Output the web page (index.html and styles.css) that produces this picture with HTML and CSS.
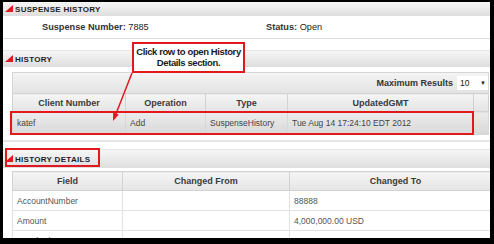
FILE: index.html
```html
<!DOCTYPE html>
<html lang="en">
<head>
    <meta charset="UTF-8">
    <title>Suspense History</title>
    <link rel="stylesheet" href="styles.css">
</head>
<body>
    <div class="page">
        <section class="panel">
            <div class="panel-head head-top">
                <svg class="tri" width="8" height="7" viewBox="0 0 8 7"><polygon points="0,7 8,0 8,7" fill="#e3171e"/></svg>
                <span>SUSPENSE HISTORY</span>
            </div>
            <div class="summary">
                <div class="summary-item"><b>Suspense Number:</b> 7885</div>
                <div class="summary-item"><b>Status:</b> Open</div>
            </div>
        </section>

        <section class="panel history">
            <div class="panel-head head-mid">
                <svg class="tri" width="8" height="7" viewBox="0 0 8 7"><polygon points="0,7 8,0 8,7" fill="#e3171e"/></svg>
                <span>HISTORY</span>
            </div>
            <div class="history-body">
                <div class="toolbar">
                    <span class="toolbar-label">Maximum Results</span>
                    <div class="select">
                        <span>10</span>
                        <span class="caret">&#9660;</span>
                    </div>
                </div>
                <table class="grid">
                    <colgroup>
                        <col style="width: 113px">
                        <col style="width: 80px">
                        <col style="width: 82px">
                        <col style="width: 186px">
                        <col>
                    </colgroup>
                    <thead>
                        <tr>
                            <th>Client Number</th>
                            <th>Operation</th>
                            <th>Type</th>
                            <th>UpdatedGMT</th>
                            <th></th>
                        </tr>
                    </thead>
                    <tbody>
                        <tr class="row-selected">
                            <td>katef</td>
                            <td>Add</td>
                            <td>SuspenseHistory</td>
                            <td>Tue Aug 14 17:24:10 EDT 2012</td>
                            <td></td>
                        </tr>
                    </tbody>
                </table>
            </div>
        </section>

        <section class="panel details">
            <div class="panel-head head-low">
                <svg class="tri" width="8" height="7" viewBox="0 0 8 7"><polygon points="0,7 8,0 8,7" fill="#e3171e"/></svg>
                <span>HISTORY DETAILS</span>
            </div>
            <table class="grid detail-grid">
                <colgroup>
                    <col style="width: 110px">
                    <col style="width: 167px">
                    <col>
                </colgroup>
                <thead>
                    <tr>
                        <th>Field</th>
                        <th>Changed From</th>
                        <th>Changed To</th>
                    </tr>
                </thead>
                <tbody>
                    <tr>
                        <td>AccountNumber</td>
                        <td></td>
                        <td>88888</td>
                    </tr>
                    <tr>
                        <td>Amount</td>
                        <td></td>
                        <td>4,000,000.00 USD</td>
                    </tr>
                    <tr>
                        <td>AttachedAmount</td>
                        <td></td>
                        <td>0.00 USD</td>
                    </tr>
                </tbody>
            </table>
        </section>

        <!-- annotations drawn over the screenshot -->
        <div class="callout">Click row to open History<br>Details section.</div>
        <svg class="arrow" width="487" height="236" viewBox="0 0 487 236">
            <line x1="129" y1="71" x2="112.5" y2="113" stroke="#e3171e" stroke-width="1.5"/>
            <polygon points="110,119 115.8,112.6 110.2,110.4" fill="#e3171e"/>
        </svg>
        <div class="mark mark-row"></div>
        <div class="mark mark-head"></div>
    </div>
</body>
</html>
```

FILE: styles.css
```css
* {
    margin: 0;
    padding: 0;
    box-sizing: border-box;
}

html, body {
    background-color: #000;
}

body {
    font-family: "Liberation Sans", Arial, sans-serif;
    color: #333;
}

.page {
    position: relative;
    margin: 2px 4px 0 3px;
    height: 236px;
    background-color: #fff;
    overflow: hidden;
}

.panel-head {
    display: flex;
    align-items: center;
    gap: 2px;
    padding-left: 2px;
    background: linear-gradient(#f6f6f6, #dedede);
    border-top: 1px solid #e6e6e6;
    font-size: 8px;
    font-weight: bold;
    letter-spacing: 0.3px;
    color: #1e1e1e;
}

.panel-head .tri {
    margin-top: -1px;
}

.head-top {
    height: 14px;
    border-top: none;
}

.head-mid {
    height: 17px;
}

.head-low {
    height: 19px;
}

.summary {
    display: flex;
    height: 23px;
    align-items: center;
    padding-left: 39px;
    border-bottom: 1px solid #dcdcdc;
    font-size: 9.2px;
    color: #222;
}

.summary-item {
    width: 275px;
}

.summary-item b {
    color: #333;
}

.history {
    margin-top: 11px;
}

.history-body {
    padding: 5px 1px 5px 9px;
    border-bottom: 2px solid #e6e6e6;
}

.toolbar {
    display: flex;
    align-items: center;
    justify-content: flex-end;
    gap: 4px;
    height: 21px;
    padding-right: 0;
    background: linear-gradient(#f4f4f4, #e3e3e3);
    border: 1px solid #d6d6d6;
    border-bottom: none;
}

.toolbar-label {
    font-size: 9px;
    font-weight: bold;
    color: #333;
}

.select {
    display: flex;
    align-items: center;
    justify-content: space-between;
    width: 31px;
    height: 14px;
    padding: 0 2px 0 3px;
    background-color: #fff;
    font-size: 8.5px;
    color: #222;
}

.caret {
    font-size: 6px;
}

.grid {
    width: 100%;
    border-collapse: collapse;
    table-layout: fixed;
}

.grid th {
    height: 18px;
    font-size: 9px;
    font-weight: bold;
    color: #3a3a3a;
    text-align: center;
    background: linear-gradient(#f5f5f5, #e4e4e4);
    border: 1px solid #d2d2d2;
}

.grid td {
    height: 23px;
    padding-left: 4px;
    font-size: 8.5px;
    color: #444;
    white-space: nowrap;
    overflow: hidden;
    border: 1px solid #d8d8d8;
}

.row-selected td {
    background: linear-gradient(#ececec, #d8d8d8);
}

.details {
    margin-top: 7px;
}

.detail-grid {
    margin: 3px 0 0 9px;
    width: 490px;
}

.detail-grid th {
    height: 19px;
}

.detail-grid td {
    height: 20px;
    background-color: #fff;
    color: #555;
    border-color: #e2e2e2;
}

.callout {
    position: absolute;
    left: 129px;
    top: 40px;
    width: 113px;
    height: 31px;
    padding-top: 2px;
    border: 2px solid #e3171e;
    background-color: #fff;
    font-size: 9.5px;
    font-weight: bold;
    letter-spacing: -0.4px;
    line-height: 11px;
    text-align: center;
    color: #1a1a1a;
}

.arrow {
    position: absolute;
    left: 0;
    top: 0;
    pointer-events: none;
}

.mark {
    position: absolute;
    border: 2px solid #e3171e;
}

.mark-row {
    left: 7px;
    top: 109px;
    width: 464px;
    height: 24px;
}

.mark-head {
    left: 2px;
    top: 146px;
    width: 95px;
    height: 19px;
}
```
